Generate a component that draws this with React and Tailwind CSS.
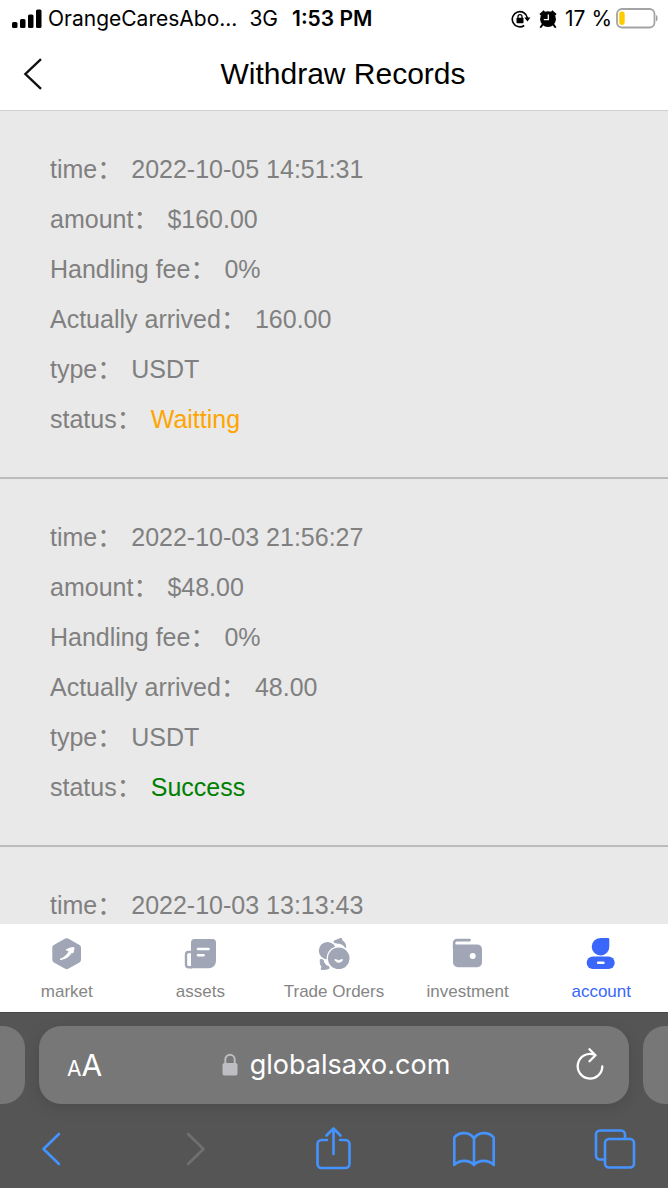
// Withdraw records screen: status bar, header, records list, tab bar, browser bar.

import React from "react";

const RECORDS = [
  {
    time: "2022-10-05 14:51:31",
    amount: "$160.00",
    fee: "0%",
    arrived: "160.00",
    type: "USDT",
    status: "Waitting",
  },
  {
    time: "2022-10-03 21:56:27",
    amount: "$48.00",
    fee: "0%",
    arrived: "48.00",
    type: "USDT",
    status: "Success",
  },
  {
    time: "2022-10-03 13:13:43",
  },
];

const FIELDS = [
  { key: "time", label: "time" },
  { key: "amount", label: "amount" },
  { key: "fee", label: "Handling fee" },
  { key: "arrived", label: "Actually arrived" },
  { key: "type", label: "type" },
  { key: "status", label: "status" },
];

const STATUS_COLORS = {
  Waitting: "text-[#ffa500]",
  Success: "text-[#008000]",
};

/* =========================
   Status bar
   ========================= */

function SignalIcon() {
  return (
    <svg width="30" height="20" viewBox="0 0 30 20" aria-hidden="true">
      <rect x="0" y="13" width="5.5" height="6" rx="1.5" />
      <rect x="8" y="10" width="5.5" height="9" rx="1.5" />
      <rect x="16" y="5.5" width="5.5" height="13.5" rx="1.5" />
      <rect x="24" y="0.5" width="5.5" height="18.5" rx="1.5" />
    </svg>
  );
}

function RotationLockIcon() {
  return (
    <svg width="20" height="18" viewBox="0 0 20 18" fill="none" stroke="#000" aria-hidden="true">
      <path d="M13.2 15.5A7.6 7.6 0 1 1 16.4 8" strokeWidth="1.6" />
      <path d="M13.3 7.6h6.2l-3.1 4z" fill="#000" stroke="none" />
      <rect x="5.5" y="7.8" width="7" height="5.4" rx="0.8" fill="#000" stroke="none" />
      <path d="M7 8.4V6.6a2 2 0 0 1 4 0v1.8" strokeWidth="1.3" />
    </svg>
  );
}

function AlarmIcon() {
  return (
    <svg width="18" height="18" viewBox="0 0 18 18" aria-hidden="true">
      <circle cx="9" cy="9.2" r="7.9" />
      <path d="M1.2 4.8 5.4 1.2M16.8 4.8l-4.2-3.6" fill="none" stroke="#000" strokeWidth="2.4" />
      <path d="m3.6 14.6-1.8 2.4M14.4 14.6l1.8 2.4" stroke="#000" strokeWidth="2" strokeLinecap="round" />
      <path d="M9.3 4.6v5H4.8" fill="none" stroke="#fff" strokeWidth="1.3" />
    </svg>
  );
}

function BatteryIcon() {
  return (
    <svg width="42" height="22" viewBox="0 0 42 22" aria-hidden="true">
      <rect x="1" y="1" width="37.5" height="18.5" rx="5" fill="#fff" stroke="#a3a3a3" strokeWidth="1.8" />
      <rect x="3.2" y="3.5" width="5.5" height="13.5" rx="2.4" fill="#ffcc00" />
      <path d="M40 7c2.2.8 2.2 5.7 0 6.5z" fill="#a3a3a3" />
    </svg>
  );
}

function StatusBar() {
  return (
    <div className="flex h-[37px] shrink-0 items-center pl-3 pr-[10px] font-[Inter,sans-serif] text-[21px]">
      <SignalIcon />
      <span className="ml-[6px]">OrangeCaresAbo...</span>
      <span className="ml-3">3G</span>
      <span className="ml-[14px] font-semibold">1:53 PM</span>
      <div className="ml-auto flex items-center">
        <RotationLockIcon />
        <span className="ml-2">
          <AlarmIcon />
        </span>
        <span className="ml-2 mr-1">17 %</span>
        <BatteryIcon />
      </div>
    </div>
  );
}

/* =========================
   Page
   ========================= */

function Header() {
  return (
    <header className="grid h-[74px] shrink-0 grid-cols-[64px_1fr_46px] items-center border-b border-[#cfcfcf]">
      <button type="button" aria-label="Back" className="flex h-full items-center pl-[23px]">
        <svg width="20" height="32" viewBox="0 0 20 32" fill="none" stroke="#111" strokeWidth="2.4">
          <path d="M18 1.2 2.4 16 18 30.8" />
        </svg>
      </button>
      <h1 className="text-center text-[30px] leading-[36px] text-black">Withdraw Records</h1>
    </header>
  );
}

function Field({ label, value, valueClass }) {
  return (
    <div className="flex h-[50px] items-center gap-[9px]">
      <dt>{label}：</dt>
      <dd className={valueClass}>{value}</dd>
    </div>
  );
}

function Record({ item }) {
  return (
    <li className="border-b-2 border-[#bcbcbc] px-[50px] py-[33px]">
      <dl>
        {FIELDS.filter(({ key }) => item[key]).map(({ key, label }) => (
          <Field
            key={key}
            label={label}
            value={item[key]}
            valueClass={key === "status" ? STATUS_COLORS[item.status] : undefined}
          />
        ))}
      </dl>
    </li>
  );
}

/* =========================
   Tab bar
   ========================= */

function MarketIcon() {
  return (
    <svg width="32" height="32" viewBox="0 0 32 32" fill="none" aria-hidden="true">
      <path
        d="M15.7 3.2 27 9.6v12.2l-11.3 6.4L4.3 21.8V9.6z"
        fill="currentColor"
        stroke="currentColor"
        strokeWidth="6"
        strokeLinejoin="round"
      />
      <path
        d="M9 21.4c4.4-1.6 7.6-4.6 9.4-8.8l-3.2-.6c2.4-1.6 5-2.4 7.8-2.4 0 2-.4 3.8-1.2 5.4l-1.2-.8c-2.2 4.4-6 6.8-11.6 7.2z"
        fill="#fff"
        stroke="#fff"
        strokeWidth="1"
        strokeLinejoin="round"
      />
    </svg>
  );
}

function AssetsIcon() {
  return (
    <svg width="32" height="32" viewBox="0 0 32 32" fill="none" aria-hidden="true">
      <path d="M10.5 1h18A3.5 3.5 0 0 1 32 4.5V23a7.3 7.3 0 0 1-7.3 7.3H7V4.5A3.5 3.5 0 0 1 10.5 1z" fill="currentColor" />
      <path d="M8 14H4.5A2.5 2.5 0 0 0 2 16.5v10.3a2.5 2.5 0 0 0 2.5 2.5H8" stroke="currentColor" strokeWidth="2.4" />
      <path d="M5.5 17v9" stroke="#fff" strokeWidth="2.4" strokeLinecap="round" />
      <path d="M14 11h10.5M14 17.2h5.5" stroke="#fff" strokeWidth="2.6" strokeLinecap="round" />
    </svg>
  );
}

function OrdersIcon() {
  return (
    <svg width="32" height="32" viewBox="0 0 32 32" fill="none" aria-hidden="true">
      <circle cx="9.5" cy="12.7" r="8.7" fill="currentColor" />
      <circle cx="20.7" cy="20.3" r="12" fill="#fff" />
      <circle cx="20.7" cy="20.3" r="10.8" fill="currentColor" />
      <path d="M16.8 21.6h1.4c1.2 1.2 3.8 1.2 5 0h1.4c-.8 3.6-7 3.6-7.8 0z" fill="#fff" stroke="#fff" strokeWidth="0.8" strokeLinejoin="round" />
      <path d="M16 3.2 23.4 0l.4 2.4c2.6 1.2 4 3.6 3.8 7.4-1.4-2.4-3.4-3.8-6-4.4l-5.2-.8z" fill="currentColor" stroke="currentColor" strokeWidth="1" strokeLinejoin="round" />
      <path d="M2.4 21.4 5 22c.6 3.4 2.6 5.6 6 6.8v1.6c-2.2 1-5.2 1.2-8 .8l1-2.4c-1.6-1.8-2-4.6-1.6-7.4z" fill="currentColor" stroke="currentColor" strokeWidth="1" strokeLinejoin="round" />
    </svg>
  );
}

function InvestmentIcon() {
  return (
    <svg width="32" height="32" viewBox="0 0 32 32" fill="none" aria-hidden="true">
      <path d="M17.6 2.1H5A2.9 2.9 0 0 0 2.1 5v5" stroke="currentColor" strokeWidth="2.6" strokeLinecap="round" />
      <path d="M1 5.5c.8.7 1.8.9 3.5.9h20.7A4.8 4.8 0 0 1 30 11.2v13.2a4.8 4.8 0 0 1-4.8 4.8H5.8A4.8 4.8 0 0 1 1 24.4z" fill="currentColor" />
      <circle cx="20.7" cy="18" r="3" fill="#fff" />
    </svg>
  );
}

function AccountIcon() {
  return (
    <svg width="32" height="32" viewBox="0 0 32 32" fill="none" aria-hidden="true">
      <path d="M15.5 0h7.6A1.2 1.2 0 0 1 24.3 1.2v7.2A8.8 8.7 0 1 1 15.5 0z" fill="currentColor" />
      <rect x="1.7" y="18.4" width="28" height="12.6" rx="6.2" fill="currentColor" />
      <path d="M13.2 24.7h5.2" stroke="#fff" strokeWidth="2.6" strokeLinecap="round" />
    </svg>
  );
}

const TABS = [
  { label: "market", Icon: MarketIcon },
  { label: "assets", Icon: AssetsIcon },
  { label: "Trade Orders", Icon: OrdersIcon },
  { label: "investment", Icon: InvestmentIcon },
  { label: "account", Icon: AccountIcon, active: true },
];

function TabBar() {
  return (
    <nav className="grid h-[88px] shrink-0 grid-cols-5 bg-white">
      {TABS.map(({ label, Icon, active }) => (
        <a
          key={label}
          href={`#${label}`}
          aria-current={active ? "page" : undefined}
          className="flex flex-col items-center gap-3 whitespace-nowrap pt-[14px]"
        >
          <span className={`h-8 ${active ? "text-[#3a66fb]" : "text-[#a0a6b6]"}`}>
            <Icon />
          </span>
          <span className={`text-[17px] leading-5 ${active ? "text-[#3a66fb]" : "text-[#858585]"}`}>
            {label}
          </span>
        </a>
      ))}
    </nav>
  );
}

/* =========================
   Browser bar
   ========================= */

function AddressBar() {
  return (
    <div className="flex h-[78px] gap-[14px]">
      <div className="w-[25px] shrink-0 rounded-r-[22px] bg-[#777]" />
      <div className="flex min-w-0 flex-1 items-center justify-between rounded-[22px] bg-[#777] px-[25px] text-white shadow-[0_4px_16px_rgba(0,0,0,0.12)]">
        <button type="button" aria-label="Page settings" className="flex w-8 items-baseline pl-[3px]">
          <span className="text-[21px]">A</span>
          <span className="text-[30px]">A</span>
        </button>
        <a href="#site" className="flex items-center gap-3 text-[27px]">
          <svg width="16" height="24" viewBox="0 0 16 24" fill="none" aria-hidden="true">
            <rect x="0.5" y="10" width="15" height="12.6" rx="2" fill="#bebdc4" />
            <path d="M3.3 11V6.4a4.7 4.7 0 0 1 9.4 0V11" stroke="#bebdc4" strokeWidth="1.9" />
          </svg>
          globalsaxo.com
        </a>
        <button type="button" aria-label="Reload">
          <svg width="28" height="34" viewBox="0 0 28 34" fill="none" stroke="#fff" strokeWidth="2.3" strokeLinecap="round" strokeLinejoin="round">
            <path d="M18.5 6.8A12.3 12.3 0 1 0 26.3 18.4" />
            <path d="m13.5 1.2 6 6-6 6" />
          </svg>
        </button>
      </div>
      <div className="w-[25px] shrink-0 rounded-l-[22px] bg-[#777]" />
    </div>
  );
}

function ToolButton({ label, disabled, children }) {
  return (
    <button
      type="button"
      aria-label={label}
      disabled={disabled}
      className={`flex w-[42px] justify-center ${disabled ? "text-[#707070]" : "text-[#4593ff]"}`}
    >
      <svg
        width="42"
        height="44"
        viewBox="0 0 42 44"
        fill="none"
        stroke="currentColor"
        strokeWidth="2.6"
        strokeLinecap="round"
        strokeLinejoin="round"
      >
        {children}
      </svg>
    </button>
  );
}

function ToolBar() {
  return (
    <div className="flex items-center justify-between pl-[30px] pr-8 pt-[22px]">
      <ToolButton label="Previous page">
        <path d="M29 8 13.5 23 29 38" />
      </ToolButton>
      <ToolButton label="Next page" disabled>
        <path d="m17 8 15.5 15L17 38" />
      </ToolButton>
      <ToolButton label="Share">
        <path d="M15 14H9.5A4 4 0 0 0 5.5 18v20a4 4 0 0 0 4 4h24a4 4 0 0 0 4-4V18a4 4 0 0 0-4-4H28" />
        <path d="M21.5 28V2.5M14.5 9.5l7-7 7 7" />
      </ToolButton>
      <ToolButton label="Bookmarks">
        <path d="M21 12.5C17 5.5 6 5.5 1.3 11.5V39c5-5.5 15-5.5 19.7 0 4.7-5.5 14.7-5.5 19.7 0V11.5C36 5.5 25 5.5 21 12.5zM21 12.5V39" />
      </ToolButton>
      <ToolButton label="Tabs">
        <path d="M11 33.5H6a4 4 0 0 1-4-4v-21a4 4 0 0 1 4-4h21a4 4 0 0 1 4 4v4" />
        <rect x="11" y="13" width="29" height="28.5" rx="4" />
      </ToolButton>
    </div>
  );
}

function BrowserBar() {
  return (
    <footer className="h-[176px] shrink-0 border-t border-[#484848] bg-[#555] pt-[13px] font-[Inter,sans-serif]">
      <AddressBar />
      <ToolBar />
    </footer>
  );
}

export default function App() {
  return (
    <div className="flex h-screen flex-col overflow-hidden bg-white font-['Liberation_Sans','Noto_Sans_CJK_SC',sans-serif] text-black">
      <StatusBar />
      <Header />
      <main className="min-h-0 flex-1 overflow-hidden bg-[#e9e9e9] text-[25px] leading-[30px] text-[#808080]">
        <ul>
          {RECORDS.map((item) => (
            <Record key={item.time} item={item} />
          ))}
        </ul>
      </main>
      <TabBar />
      <BrowserBar />
    </div>
  );
}
